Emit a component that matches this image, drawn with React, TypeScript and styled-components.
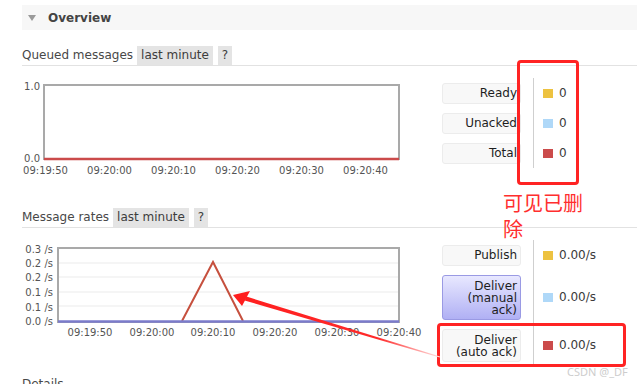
import React from "react";
import styled, { createGlobalStyle } from "styled-components";

const GlobalStyle = createGlobalStyle`
  html, body { margin: 0; padding: 0; background: #fff; }
  body { overflow: hidden; }
  * { box-sizing: border-box; }
`;

const Page = styled.div`
  position: relative;
  width: 637px;
  height: 384px;
  overflow: hidden;
  padding: 5px 0 0 22px;
  font-family: "DejaVu Sans", Verdana, sans-serif;
  font-size: 12px;
  color: #484848;
`;

const OverviewBar = styled.div`
  display: flex;
  align-items: center;
  height: 25px;
  padding-left: 6px;
  gap: 12px;
  background: #f7f7f7;
`;

const Caret = styled.span`
  width: 0;
  height: 0;
  border-left: 4px solid transparent;
  border-right: 4px solid transparent;
  border-top: 6px solid #9a9a9a;
`;

const OverviewTitle = styled.span`
  font-weight: bold;
  font-size: 12px;
  color: #444;
`;

const TitleRow = styled.div<{ $top: number }>`
  display: flex;
  align-items: stretch;
  height: 20px;
  margin-top: ${(p) => p.$top}px;
  border-bottom: 1px solid #e2e2e2;
  line-height: 19px;
`;

const TitleText = styled.span`
  padding-right: 4px;
  color: #484848;
`;

const Pill = styled.span<{ $gap?: number }>`
  background: #e4e4e4;
  padding: 0 4px;
  margin-left: ${(p) => p.$gap ?? 0}px;
  height: 19px;
  color: #3c3c3c;
`;

const ChartRow = styled.div<{ $top: number }>`
  display: flex;
  align-items: flex-start;
  margin-top: ${(p) => p.$top}px;
`;

const ChartSvg = styled.svg`
  display: block;
  flex-shrink: 0;
  font-family: "DejaVu Sans", Verdana, sans-serif;
  font-size: 10px;
  fill: #545454;
  overflow: visible;
`;

const Legend = styled.div`
  display: flex;
  flex-direction: column;
  margin-left: 10px;
`;

const LegendRow = styled.div`
  display: flex;
  align-items: stretch;
`;

const LabelBox = styled.div<{ $lh: number; $highlight?: boolean }>`
  width: 79px;
  margin: 4.5px 0;
  padding: ${(p) => (p.$lh === 13 ? "3px 3px" : "4px 3px 3px")};
  line-height: ${(p) => p.$lh}px;
  text-align: right;
  color: #1e1e1e;
  border-radius: 3px;
  border: 1px solid ${(p) => (p.$highlight ? "#9a9ae4" : "#ececec")};
  background: ${(p) =>
    p.$highlight ? "linear-gradient(#e8e8ff, #b0b0f4)" : "#f8f8f8"};
`;

const ValueCell = styled.div`
  display: flex;
  align-items: center;
  gap: 6px;
  margin-left: 12px;
  padding-left: 9px;
  border-left: 1px solid #cfcfcf;
  color: #3a3a3a;
`;

const Swatch = styled.span<{ $color: string }>`
  width: 10px;
  height: 9px;
  background: ${(p) => p.$color};
`;

const Annotation = styled.div<{ $l: number; $t: number; $w: number; $h: number }>`
  position: absolute;
  left: ${(p) => p.$l}px;
  top: ${(p) => p.$t}px;
  width: ${(p) => p.$w}px;
  height: ${(p) => p.$h}px;
  border: 3px solid #ff2323;
  border-radius: 4px;
  pointer-events: none;
`;

const Note = styled.div`
  position: absolute;
  left: 503px;
  top: 190px;
  width: 90px;
  font-family: "Noto Sans CJK SC", "Noto Sans", sans-serif;
  font-size: 20px;
  line-height: 26px;
  color: #ff2e2e;
`;

const Watermark = styled.div`
  position: absolute;
  left: 567px;
  top: 364px;
  font-family: "Noto Sans", sans-serif;
  font-size: 11px;
  color: #cdcdcd;
  white-space: nowrap;
`;

const ArrowLayer = styled.svg`
  position: absolute;
  left: 0;
  top: 0;
  pointer-events: none;
`;

const QueuedChart = () => {
  const ticks = ["09:19:50", "09:20:00", "09:20:10", "09:20:20", "09:20:30", "09:20:40"];
  return (
    <ChartSvg width={410} height={100}>
      <text x={18} y={11.5} textAnchor="end">1.0</text>
      <text x={18} y={84} textAnchor="end">0.0</text>
      <rect x={22} y={7} width={355} height={74} fill="#fff" stroke="#a9a9a9" strokeWidth={2} />
      <line x1={22} y1={81} x2={377} y2={81} stroke="#cb4b4b" strokeWidth={2.5} />
      {ticks.map((t, i) => (
        <text key={t} x={23.5 + i * 64} y={96} textAnchor="middle">{t}</text>
      ))}
    </ChartSvg>
  );
};

const RatesChart = () => {
  const ticks = ["09:19:50", "09:20:00", "09:20:10", "09:20:20", "09:20:30", "09:20:40"];
  const ylabels = ["0.3 /s", "0.2 /s", "0.2 /s", "0.1 /s", "0.1 /s", "0.0 /s"];
  const ys = [12.7, 26.7, 40.7, 55.7, 70.7, 84.7];
  const grid = [23, 37, 52, 66];
  const xs = [68, 130, 191, 253, 315, 377];
  return (
    <ChartSvg width={410} height={100}>
      {ylabels.map((l, i) => (
        <text key={i} x={31} y={ys[i]} textAnchor="end">{l}</text>
      ))}
      <rect x={36} y={8} width={341} height={74} fill="#fff" stroke="#a9a9a9" strokeWidth={2} />
      {grid.map((g) => (
        <line key={g} x1={37} y1={g} x2={376} y2={g} stroke="#ebebeb" strokeWidth={1} />
      ))}
      <polyline points="160,81 191,22 221,81" fill="none" stroke="#c6503e" strokeWidth={2} />
      <line x1={36} y1={81.5} x2={377} y2={81.5} stroke="#7b7bcb" strokeWidth={2.5} />
      {ticks.map((t, i) => (
        <text key={t} x={xs[i]} y={96} textAnchor="middle">{t}</text>
      ))}
    </ChartSvg>
  );
};

export default function App() {
  return (
    <>
      <GlobalStyle />
      <Page>
        <OverviewBar>
          <Caret />
          <OverviewTitle>Overview</OverviewTitle>
        </OverviewBar>

        <TitleRow $top={16}>
          <TitleText>Queued messages</TitleText>
          <Pill>last minute</Pill>
          <Pill $gap={5}>?</Pill>
        </TitleRow>

        <ChartRow $top={12}>
          <QueuedChart />
          <Legend>
            {[
              ["Ready", "#edc240"],
              ["Unacked", "#afd8f8"],
              ["Total", "#cb4b4b"],
            ].map(([label, color]) => (
              <LegendRow key={label}>
                <LabelBox $lh={13}>{label}</LabelBox>
                <ValueCell>
                  <Swatch $color={color} />
                  <span>0</span>
                </ValueCell>
              </LegendRow>
            ))}
          </Legend>
        </ChartRow>

        <TitleRow $top={30}>
          <TitleText>Message rates</TitleText>
          <Pill>last minute</Pill>
          <Pill $gap={5}>?</Pill>
        </TitleRow>

        <ChartRow $top={12}>
          <RatesChart />
          <Legend>
            <LegendRow>
              <LabelBox $lh={13}>Publish</LabelBox>
              <ValueCell>
                <Swatch $color="#edc240" />
                <span>0.00/s</span>
              </ValueCell>
            </LegendRow>
            <LegendRow>
              <LabelBox $lh={12} $highlight>
                Deliver
                <br />
                (manual
                <br />
                ack)
              </LabelBox>
              <ValueCell>
                <Swatch $color="#afd8f8" />
                <span>0.00/s</span>
              </ValueCell>
            </LegendRow>
            <LegendRow>
              <LabelBox $lh={12}>
                Deliver
                <br />
                (auto ack)
              </LabelBox>
              <ValueCell>
                <Swatch $color="#cb4b4b" />
                <span>0.00/s</span>
              </ValueCell>
            </LegendRow>
          </Legend>
        </ChartRow>

        <TitleRow $top={9}>
          <TitleText>Details</TitleText>
        </TitleRow>

        <Annotation $l={517} $t={60} $w={62} $h={125} />
        <Annotation $l={437} $t={323} $w={189} $h={44} />
        <Note>可见已删除</Note>
        <Watermark>CSDN @_DF</Watermark>
        <ArrowLayer width={637} height={384}>
          <defs>
            <linearGradient id="shaft" gradientUnits="userSpaceOnUse" x1={234} y1={295} x2={440} y2={357}>
              <stop offset="0" stopColor="#ff1e1e" />
              <stop offset="0.7" stopColor="#ff2a2a" />
              <stop offset="1" stopColor="#ffe0e0" />
            </linearGradient>
          </defs>
          <polygon points="244.6,300.4 246.4,296.6 440,356.6 439.7,357.6" fill="url(#shaft)" />
          <polygon points="233,295 250,291 246,298.5 242,306" fill="#ff1e1e" />
        </ArrowLayer>
      </Page>
    </>
  );
}
